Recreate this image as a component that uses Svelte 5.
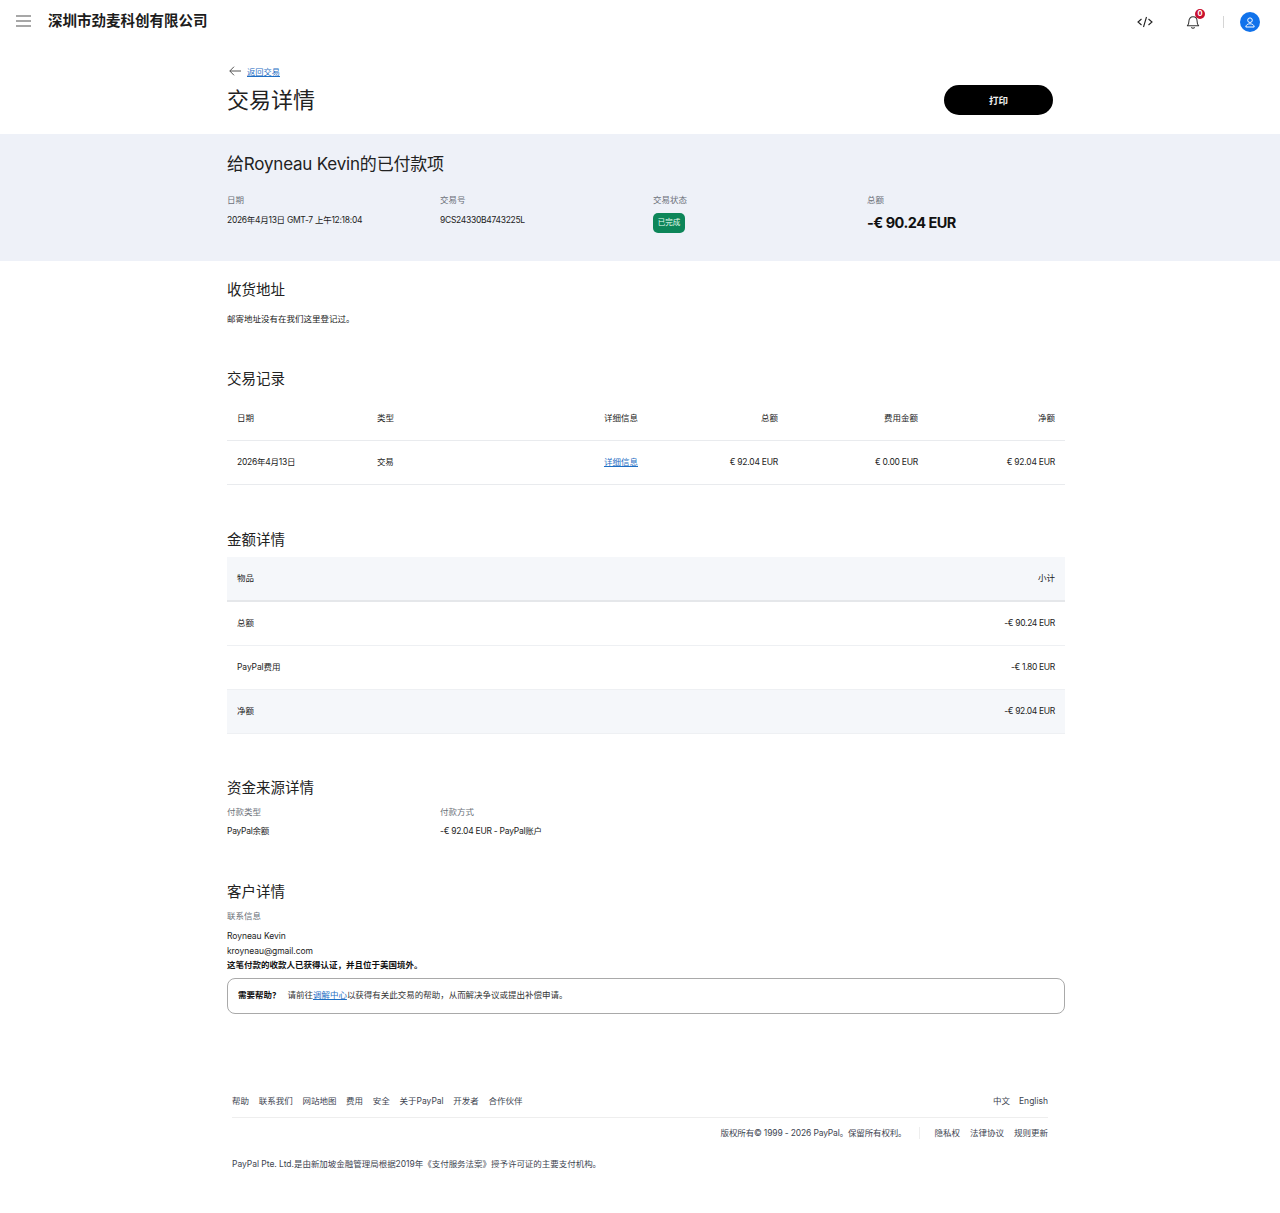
<script>
  const tx = [
    ['日期', '2026年4月13日'],
    ['类型', '交易'],
    ['详细信息', '详细信息'],
    ['总额', '€ 92.04 EUR'],
    ['费用金额', '€ 0.00 EUR'],
    ['净额', '€ 92.04 EUR']
  ];
  const amounts = [
    { k: '总额', v: '-€ 90.24 EUR', shade: false },
    { k: 'PayPal费用', v: '-€ 1.80 EUR', shade: false },
    { k: '净额', v: '-€ 92.04 EUR', shade: true }
  ];
  const footLinks = ['帮助', '联系我们', '网站地图', '费用', '安全', '关于PayPal', '开发者', '合作伙伴'];
</script>

<header class="top">
  <svg class="burger" width="16" height="12" viewBox="0 0 16 12" aria-hidden="true">
    <path d="M0 1h15M0 6h15M0 11h15" stroke="#8a8a8a" stroke-width="1.3" fill="none" />
  </svg>
  <div class="org">深圳市劲麦科创有限公司</div>
  <div class="tools">
    <svg class="code" width="16" height="12" viewBox="0 0 16 12" aria-hidden="true">
      <path d="M4.5 3 1 6l3.5 3M11.5 3 15 6l-3.5 3M9.5 1 6.5 11" stroke="#222" stroke-width="1.1" fill="none" />
    </svg>
    <span class="bell">
      <svg width="14" height="15" viewBox="0 0 14 16" aria-hidden="true">
        <path d="M1 12.5c1.200-1 1.600-2 1.600-4.500 0-3 1.800-5 4.400-5s4.400 2 4.400 5c0 2.500.4 3.500 1.600 4.500zM5.200 14.300c.9.900 2.700.900 3.600 0" stroke="#333" stroke-width="1.100" fill="none" stroke-linejoin="round" />
      </svg>
      <b class="badge">0</b>
    </span>
    <i class="sep"></i>
    <span class="avatar">
      <svg width="10" height="11" viewBox="0 0 10 11" aria-hidden="true">
        <circle cx="5" cy="3.200" r="2.300" stroke="#fff" stroke-width="1" fill="none" />
        <path d="M.8 10c.3-2.300 2-3.200 4.200-3.200s3.900.9 4.200 3.200z" stroke="#fff" stroke-width="1" fill="none" />
      </svg>
    </span>
  </div>
</header>

<div class="wrap head">
  <div class="back">
    <svg width="12" height="10" viewBox="0 0 12 10" aria-hidden="true">
      <path d="M5 .7.8 5 5 9.300M.8 5H12" stroke="#555" stroke-width="1" fill="none" />
    </svg>
    <a href="#back">返回交易</a>
  </div>
  <div class="titlerow">
    <h1>交易详情</h1>
    <button>打印</button>
  </div>
</div>

<section class="band">
  <div class="wrap">
    <h2 class="payee">给Royneau Kevin的已付款项</h2>
    <div class="facts">
      <div><div class="lbl">日期</div><div class="val tight">2026年4月13日 GMT-7 上午12:18:04</div></div>
      <div><div class="lbl">交易号</div><div class="val tight">9CS24330B4743225L</div></div>
      <div><div class="lbl">交易状态</div><span class="pill">已完成</span></div>
      <div><div class="lbl">总额</div><div class="sum">-€ 90.24 EUR</div></div>
    </div>
  </div>
</section>

<main class="wrap">
  <h3 class="s1">收货地址</h3>
  <p class="addr">邮寄地址没有在我们这里登记过。</p>

  <h3 class="s2">交易记录</h3>
  <div class="tx">
    {#each [0, 1] as row}
      <div class="txrow">
        {#each tx as col, i}
          <div class="cell" class:end={i >= 2} class:num={row === 1 && i !== 2}>
            {#if row === 1 && i === 2}<a href="#d">{col[1]}</a>{:else}{col[row]}{/if}
          </div>
        {/each}
      </div>
    {/each}
  </div>

  <h3 class="s3">金额详情</h3>
  <div class="amt">
    <div class="amtrow headrow"><span>物品</span><span>小计</span></div>
    {#each amounts as a}
      <div class="amtrow" class:shade={a.shade}><span class="k">{a.k}</span><span class="v">{a.v}</span></div>
    {/each}
  </div>

  <h3 class="s4">资金来源详情</h3>
  <div class="funds">
    <div><div class="lbl">付款类型</div><div class="val fv">PayPal余额</div></div>
    <div><div class="lbl">付款方式</div><div class="val fv">-€ 92.04 EUR - PayPal账户</div></div>
  </div>

  <h3 class="s5">客户详情</h3>
  <div class="lbl contact">联系信息</div>
  <div class="line first">Royneau Kevin</div>
  <div class="line">kroyneau@gmail.com</div>
  <div class="line strong">这笔付款的收款人已获得认证，并且位于美国境外。</div>

  <div class="help">
    <b>需要帮助？</b>
    <span>请前往<a href="#r">调解中心</a>以获得有关此交易的帮助，从而解决争议或提出补偿申请。</span>
  </div>
</main>

<footer class="foot">
  <div class="frow">
    <nav class="links">
      {#each footLinks as l}<span>{l}</span>{/each}
    </nav>
    <nav class="langs"><span>中文</span><span>English</span></nav>
  </div>
  <div class="frow2">
    <span class="copy">版权所有© 1999 - 2026 PayPal。保留所有权利。</span>
    <i class="fsep"></i>
    <nav class="legal"><span>隐私权</span><span>法律协议</span><span>规则更新</span></nav>
  </div>
  <p class="lic">PayPal Pte. Ltd.是由新加坡金融管理局根据2019年《支付服务法案》授予许可证的主要支付机构。</p>
</footer>

<style>
  :global(body) {
    margin: 0;
    background: #fff;
    color: #1a1a1a;
    font-family: Inter, "Noto Sans CJK SC", sans-serif;
  }
  h1, h2, h3, p { margin: 0; font-weight: 400; }
  a { color: #1f6fc4; text-decoration: underline; }

  .top {
    display: flex;
    align-items: center;
    height: 42px;
    padding: 0 20px 0 16px;
  }
  .burger { margin-right: 16px; }
  .org { font-size: 14.500px; font-weight: 700; color: #1c1c1c; line-height: 42px; }
  .tools { margin-left: auto; display: flex; align-items: center; margin-top: 2px; }
  .code { margin-right: 33px; }
  .bell { position: relative; display: flex; margin-right: 23px; margin-top: -1px; }
  .badge {
    position: absolute;
    left: 9px;
    top: -5px;
    width: 10px;
    height: 10px;
    border-radius: 50%;
    background: #c8102e;
    color: #fff;
    font-size: 7.500px;
    line-height: 10px;
    text-align: center;
  }
  .sep { width: 1px; height: 12px; background: #d5d5d5; margin-right: 16px; }
  .avatar {
    width: 20px;
    height: 20px;
    border-radius: 50%;
    background: #1072eb;
    display: flex;
    align-items: center;
    justify-content: center;
  }

  .wrap { width: 838px; margin-left: 227px; }
  .head { height: 92px; }
  .back { display: flex; align-items: center; padding-top: 24px; height: 12px; gap: 6px; font-size: 8.250px; line-height: 12px; }
  .back svg { margin-left: 2px; margin-top: -2px; }
  .titlerow { display: flex; align-items: center; justify-content: space-between; margin-top: 7px; padding-right: 12px; height: 30px; }
  h1 { font-size: 22px; line-height: 30px; color: #222; }
  button {
    width: 109px;
    height: 30px;
    border: 0;
    border-radius: 15px;
    background: #000;
    color: #eee;
    font: 700 9.500px Inter, "Noto Sans CJK SC", sans-serif;
  }

  .band { background: #eef1f8; height: 127px; overflow: hidden; }
  .payee { font-size: 17px; letter-spacing: -.2px; line-height: 24px; margin-top: 18px; color: #222; }
  .facts { display: grid; grid-template-columns: 213px 213px 214px 198px; margin-top: 18px; }
  .lbl { font-size: 8.500px; line-height: 12px; color: #6b7078; }
  .val { font-size: 8.500px; line-height: 12px; color: #222; margin-top: 8px; }
  .tight { letter-spacing: -.29px; }
  .fv { letter-spacing: -.26px; margin-top: 7px; }
  .pill {
    display: block;
    width: 32px;
    height: 20px;
    margin-top: 7px;
    border-radius: 5px;
    background: #0d8659;
    color: #e9fff2;
    font-size: 7.500px;
    line-height: 19px;
    text-align: center;
  }
  .sum { font-size: 14.500px; letter-spacing: -.5px; font-weight: 700; line-height: 20px; margin-top: 7px; color: #111; }

  h3 { font-size: 14.500px; line-height: 20px; color: #222; }
  .s1 { margin-top: 19px; }
  .addr { font-size: 8.500px; line-height: 12px; margin-top: 13px; color: #222; }
  .s2 { margin-top: 44px; }

  .tx { margin-top: 8px; }
  .txrow {
    display: grid;
    grid-template-columns: 140px 140px 141px 140px 140px 137px;
    box-sizing: border-box;
    height: 44px;
    padding-bottom: 1px;
    align-items: center;
    border-bottom: 1px solid #e9ebee;
    font-size: 8.500px;
    line-height: 12px;
    color: #222;
  }
  .cell { padding: 0 10px; }
  .cell.end { text-align: right; }
  .cell.num { letter-spacing: -.24px; }

  .s3 { margin-top: 45px; }
  .amt { margin-top: 7px; }
  .amtrow {
    display: flex;
    justify-content: space-between;
    align-items: center;
    box-sizing: border-box;
    height: 44px;
    padding: 0 10px 1px;
    border-bottom: 1px solid #eef0f3;
    font-size: 8.500px;
    line-height: 12px;
    color: #222;
  }
  .k { letter-spacing: -.1px; }
  .v { letter-spacing: -.33px; }
  .headrow { background: #f5f7fa; border-bottom: 2px solid #e5e7ea; height: 45px; padding-bottom: 1px; }
  .shade { background: #f5f7fa; }

  .s4 { margin-top: 44px; }
  .funds { display: grid; grid-template-columns: 213px 1fr; margin-top: 8px; }
  .s5 { margin-top: 45px; }
  .contact { margin-top: 8px; }
  .line { font-size: 8.500px; line-height: 14.500px; letter-spacing: -.05px; color: #222; }
  .first { margin-top: 7px; }
  .strong { font-weight: 700; color: #111; letter-spacing: 0; }

  .help {
    display: flex;
    align-items: center;
    gap: 7px;
    box-sizing: border-box;
    height: 36px;
    margin-top: 5px;
    padding: 0 10px 1px;
    border: 1px solid #a9a9a9;
    border-radius: 8px;
    font-size: 8.500px;
    line-height: 12px;
    color: #333;
  }
  .help b { color: #111; }
  .help span { letter-spacing: -.02px; }

  .foot { width: 816px; margin: 80px 0 0 232px; font-size: 8.500px; line-height: 12px; color: #3d4450; }
  .frow { display: flex; justify-content: space-between; box-sizing: content-box; height: 14px; align-items: center; padding-bottom: 9px; border-bottom: 1px solid #eeeeee; }
  .links { display: flex; gap: 9.700px; }
  .langs { display: flex; gap: 9px; }
  .legal { display: flex; gap: 10px; }
  .frow2 { display: flex; justify-content: flex-end; align-items: center; height: 30px; }
  .copy { letter-spacing: -.15px; }
  .fsep { width: 1px; height: 12px; background: #eee; margin: 0 14px 0 13px; }
  .lic { margin-top: 10px; letter-spacing: -.03px; }
</style>
